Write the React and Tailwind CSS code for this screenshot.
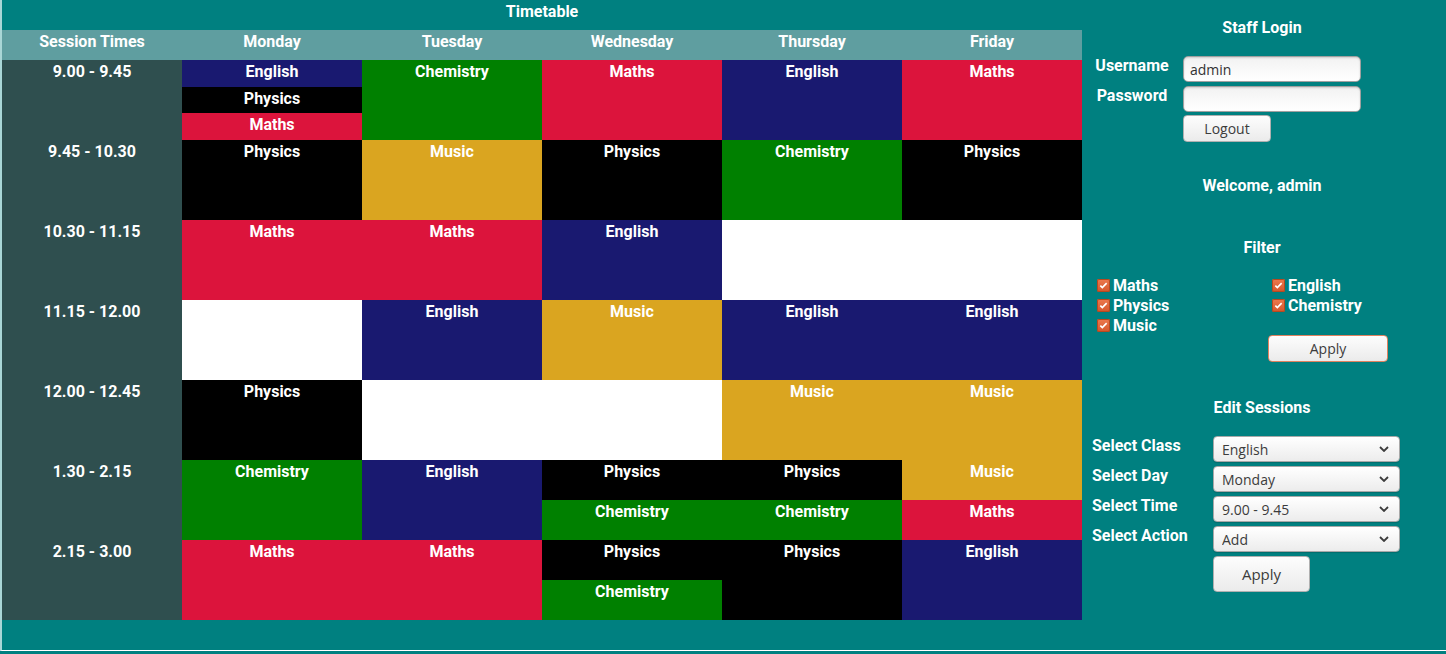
import { useState } from 'react';

const subjectColors = {
    English: 'bg-[#191970]',
    Physics: 'bg-black',
    Maths: 'bg-[#dc143c]',
    Chemistry: 'bg-[#008000]',
    Music: 'bg-[#daa520]',
};

const days = ['Monday', 'Tuesday', 'Wednesday', 'Thursday', 'Friday'];

const sessions = [
    { time: '9.00 - 9.45', cells: [['English', 'Physics', 'Maths'], ['Chemistry'], ['Maths'], ['English'], ['Maths']] },
    { time: '9.45 - 10.30', cells: [['Physics'], ['Music'], ['Physics'], ['Chemistry'], ['Physics']] },
    { time: '10.30 - 11.15', cells: [['Maths'], ['Maths'], ['English'], [], []] },
    { time: '11.15 - 12.00', cells: [[], ['English'], ['Music'], ['English'], ['English']] },
    { time: '12.00 - 12.45', cells: [['Physics'], [], [], ['Music'], ['Music']] },
    { time: '1.30 - 2.15', cells: [['Chemistry'], ['English'], ['Physics', 'Chemistry'], ['Physics', 'Chemistry'], ['Music', 'Maths']] },
    { time: '2.15 - 3.00', cells: [['Maths'], ['Maths'], ['Physics', 'Chemistry'], ['Physics'], ['English']] },
];

const controlFont = { fontFamily: '"Open Sans", "Noto Sans", sans-serif' };

function Checkbox({ label }) {
    return (
        <label className="flex h-5 items-center">
            <span className="ml-1 mr-[3px] flex h-[13px] w-[13px] items-center justify-center rounded-[2px] bg-linear-to-b from-[#ec7a4f] to-[#d4552a] shadow-[inset_0_0_0_1px_#b8481f]">
                <svg viewBox="0 0 10 10" className="h-[9px] w-[9px]">
                    <path d="M1.5 5.2l2.2 2.2L8.5 2.4" fill="none" stroke="white" strokeWidth="1.8" />
                </svg>
            </span>
            {label}
        </label>
    );
}

function SelectBox({ options, value }) {
    const [selected, setSelected] = useState(value);
    return (
        <div className="relative h-[26px] w-[187px]">
            <select
                value={selected}
                onChange={(e) => setSelected(e.target.value)}
                style={controlFont}
                className="h-full w-full appearance-none rounded-[4px] border border-[#a8a8a8] bg-linear-to-b from-white to-[#ececec] pl-2 text-[14px] font-normal text-[#3c3c3c] shadow-[0_1px_1px_rgba(0,0,0,0.15)]"
            >
                {options.map((o) => (
                    <option key={o}>{o}</option>
                ))}
            </select>
            <svg viewBox="0 0 10 6" className="pointer-events-none absolute right-[11px] top-[10px] h-[6px] w-[10px]">
                <path d="M1 1l4 4 4-4" fill="none" stroke="#3c3c3c" strokeWidth="1.8" />
            </svg>
        </div>
    );
}

export default function App() {
    const [username, setUsername] = useState('admin');

    return (
        <div
            className="h-[654px] w-full overflow-hidden bg-[#008080] font-bold text-white"
            style={{ fontFamily: 'Roboto, "Liberation Sans", sans-serif' }}
        >
            <div className="flex h-[651px] border-b border-l-2 border-b-white border-l-[#a9d6d6] text-[16px] leading-[19px]">
                {/* Timetable */}
                <div className="w-[1080px]">
                    <h1 className="h-[30px] pt-0.5 text-center">Timetable</h1>
                    <div className="grid grid-cols-[repeat(6,180px)]">
                        <div className="h-[30px] bg-[#5f9ea0] pt-0.5 text-center">Session Times</div>
                        {days.map((day) => (
                            <div key={day} className="h-[30px] bg-[#5f9ea0] pt-0.5 text-center">
                                {day}
                            </div>
                        ))}
                        {sessions.map((row) => [
                            <div key={row.time} className="h-20 bg-[#2f4f4f] pt-0.5 text-center">
                                {row.time}
                            </div>,
                            ...row.cells.map((cell, i) => (
                                <div key={row.time + i} className="flex h-20 flex-col bg-white">
                                    {cell.map((subject) => (
                                        <div key={subject} className={`flex-1 pt-0.5 text-center ${subjectColors[subject]}`}>
                                            {subject}
                                        </div>
                                    ))}
                                </div>
                            )),
                        ])}
                    </div>
                </div>

                {/* Side panel */}
                <div className="w-[360px]">
                    <h2 className="pt-[18px] text-center">Staff Login</h2>
                    <div className="mt-[19px] flex flex-col gap-1">
                        <div className="flex">
                            <span className="ml-[5px] w-[90px] text-center">Username</span>
                            <input
                                value={username}
                                onChange={(e) => setUsername(e.target.value)}
                                style={controlFont}
                                className="ml-[6px] h-[26px] w-[178px] rounded-[5px] border border-[#a0a0a0] bg-linear-to-b from-[#f2f2f2] to-white px-[6px] text-[14px] font-normal text-[#333] shadow-[inset_0_1px_2px_rgba(0,0,0,0.15)]"
                            />
                        </div>
                        <div className="flex">
                            <span className="ml-[5px] w-[90px] text-center">Password</span>
                            <input
                                type="password"
                                style={controlFont}
                                className="ml-[6px] h-[26px] w-[178px] rounded-[5px] border border-[#a0a0a0] bg-linear-to-b from-[#f2f2f2] to-white px-[6px] text-[14px] text-[#333] shadow-[inset_0_1px_2px_rgba(0,0,0,0.15)]"
                            />
                        </div>
                    </div>
                    <button
                        style={controlFont}
                        className="ml-[101px] mt-[3px] h-[27px] w-[88px] rounded-[4px] border border-[#b0b0b0] bg-linear-to-b from-[#fdfdfd] to-[#ebebeb] text-[14px] font-normal text-[#3c3c3c]"
                    >
                        Logout
                    </button>

                    <p className="mt-[34px] text-center">Welcome, admin</p>

                    <h2 className="mt-[43px] text-center">Filter</h2>
                    <div className="ml-[11px] mt-[18px] grid grid-cols-[175px_175px]">
                        <Checkbox label="Maths" />
                        <Checkbox label="English" />
                        <Checkbox label="Physics" />
                        <Checkbox label="Chemistry" />
                        <Checkbox label="Music" />
                        <button
                            style={controlFont}
                            className="col-start-2 row-start-4 h-[27px] w-[120px] rounded-[4px] border border-[#e0825f] bg-linear-to-b from-[#fdfdfd] to-[#ebebeb] text-[14px] font-normal text-[#3c3c3c]"
                        >
                            Apply
                        </button>
                    </div>

                    <h2 className="mt-[36px] text-center">Edit Sessions</h2>
                    <div className="mt-[19px] flex flex-col gap-1">
                        <div className="flex">
                            <span className="ml-[10px] w-[121px]">Select Class</span>
                            <SelectBox options={['English', 'Maths', 'Physics', 'Chemistry', 'Music']} value="English" />
                        </div>
                        <div className="flex">
                            <span className="ml-[10px] w-[121px]">Select Day</span>
                            <SelectBox options={days} value="Monday" />
                        </div>
                        <div className="flex">
                            <span className="ml-[10px] w-[121px]">Select Time</span>
                            <SelectBox options={sessions.map((s) => s.time)} value="9.00 - 9.45" />
                        </div>
                        <div className="flex">
                            <span className="ml-[10px] w-[121px]">Select Action</span>
                            <SelectBox options={['Add', 'Remove']} value="Add" />
                        </div>
                        <button
                            style={controlFont}
                            className="ml-[131px] h-[36px] w-[97px] rounded-[4px] border border-[#b0b0b0] bg-linear-to-b from-[#fdfdfd] to-[#ebebeb] text-[15px] font-normal text-[#3c3c3c]"
                        >
                            Apply
                        </button>
                    </div>
                </div>
            </div>
        </div>
    );
}
